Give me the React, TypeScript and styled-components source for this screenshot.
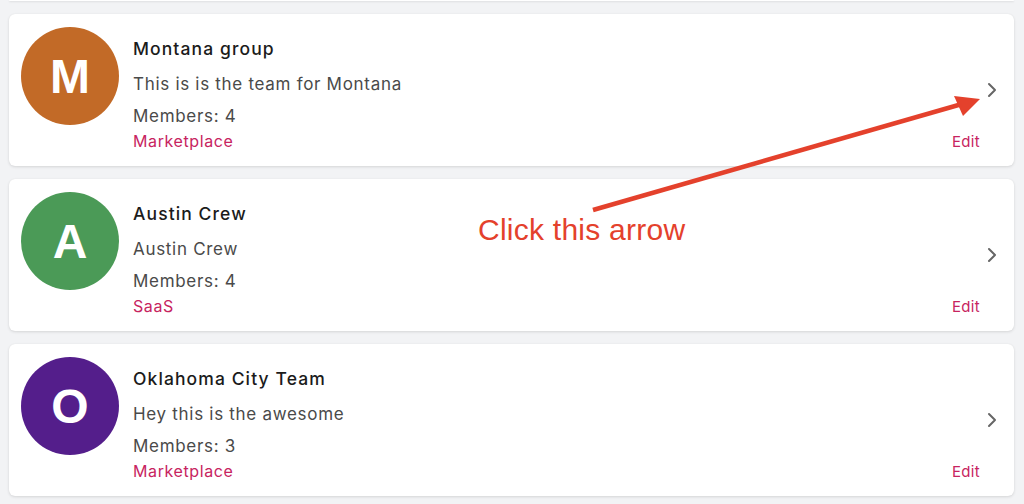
import React from "react";
import styled, { createGlobalStyle } from "styled-components";

const Global = createGlobalStyle`
  html, body { margin: 0; padding: 0; background: #f2f3f5; }
  body { font-family: Inter, "Noto Sans", sans-serif; -webkit-font-smoothing: antialiased; }
`;

const Page = styled.div`
  position: relative;
  width: 1024px;
  height: 504px;
  overflow: hidden;
  background: #f2f3f5;
`;

const List = styled.div`
  display: flex;
  flex-direction: column;
  gap: 13px;
  padding: 0 10px 0 9px;
`;

const CardTail = styled.div`
  height: 1px;
  background: #fff;
  border-radius: 0 0 6px 6px;
  box-shadow: 0 1px 2px rgba(0, 0, 0, 0.12);
`;

const Card = styled.div`
  display: grid;
  grid-template-columns: 98px 1fr auto 16px;
  column-gap: 14px;
  height: 152px;
  box-sizing: border-box;
  padding: 13px 14px 14px 12px;
  background: #fff;
  border-radius: 6px;
  box-shadow: 0 1px 3px rgba(0, 0, 0, 0.12), 0 0 1px rgba(0, 0, 0, 0.06);
`;

const Avatar = styled.div<{ $bg: string }>`
  width: 98px;
  height: 98px;
  border-radius: 50%;
  background: ${(p) => p.$bg};
  color: #fff;
  display: flex;
  align-items: center;
  justify-content: center;
  font-family: "Liberation Sans", Arial, sans-serif;
  font-weight: 700;
  font-size: 48px;
`;

const Info = styled.div`
  display: flex;
  flex-direction: column;
  padding-top: 10px;
`;

const Title = styled.div`
  font-size: 17.5px;
  line-height: 24px;
  font-weight: 500;
  letter-spacing: 1.1px;
  color: #1b1b1b;
`;

const Description = styled.div`
  margin-top: 11px;
  font-size: 17px;
  line-height: 24px;
  letter-spacing: 0.7px;
  color: #4a4a4a;
`;

const Members = styled.div`
  margin-top: 8px;
  font-size: 17px;
  line-height: 24px;
  letter-spacing: 0.7px;
  color: #4a4a4a;
`;

const Category = styled.div`
  margin-top: 3px;
  font-size: 16px;
  line-height: 20px;
  letter-spacing: 0.6px;
  color: #c7245f;
`;

const EditLink = styled.div`
  align-self: end;
  font-size: 15px;
  line-height: 20px;
  letter-spacing: 0.3px;
  color: #c7245f;
  margin-right: -10px;
`;

const Chevron = styled.div`
  align-self: center;
  display: flex;
  justify-content: center;
`;

const Overlay = styled.svg`
  position: absolute;
  left: 0;
  top: 0;
  pointer-events: none;
`;

const Note = styled.div`
  position: absolute;
  left: 478px;
  top: 215px;
  font-family: "Liberation Sans", Arial, sans-serif;
  font-size: 30px;
  line-height: 30px;
  letter-spacing: 0.25px;
  color: #e4412c;
  white-space: nowrap;
`;

const teams = [
  { letter: "M", bg: "#c26a27", title: "Montana group", desc: "This is is the team for Montana", members: 4, cat: "Marketplace" },
  { letter: "A", bg: "#4b9a57", title: "Austin Crew", desc: "Austin Crew", members: 4, cat: "SaaS" },
  { letter: "O", bg: "#541e8b", title: "Oklahoma City Team", desc: "Hey this is the awesome", members: 3, cat: "Marketplace" },
];

export default function App() {
  return (
    <Page>
      <Global />
      <List>
        <CardTail />
        {teams.map((t) => (
          <Card key={t.title}>
            <Avatar $bg={t.bg}>{t.letter}</Avatar>
            <Info>
              <Title>{t.title}</Title>
              <Description>{t.desc}</Description>
              <Members>Members: {t.members}</Members>
              <Category>{t.cat}</Category>
            </Info>
            <EditLink>Edit</EditLink>
            <Chevron>
              <svg width="12" height="16" viewBox="0 0 12 16">
                <path d="M3 2 L9 8 L3 14" fill="none" stroke="#666" strokeWidth="2" strokeLinecap="round" strokeLinejoin="round" />
              </svg>
            </Chevron>
          </Card>
        ))}
      </List>
      <Overlay width="1024" height="504" viewBox="0 0 1024 504">
        <line x1="593" y1="210" x2="962" y2="104" stroke="#e4412c" strokeWidth="4.5" />
        <polygon points="980,99 954,96 963,116" fill="#e4412c" />
      </Overlay>
      <Note>Click this arrow</Note>
    </Page>
  );
}
